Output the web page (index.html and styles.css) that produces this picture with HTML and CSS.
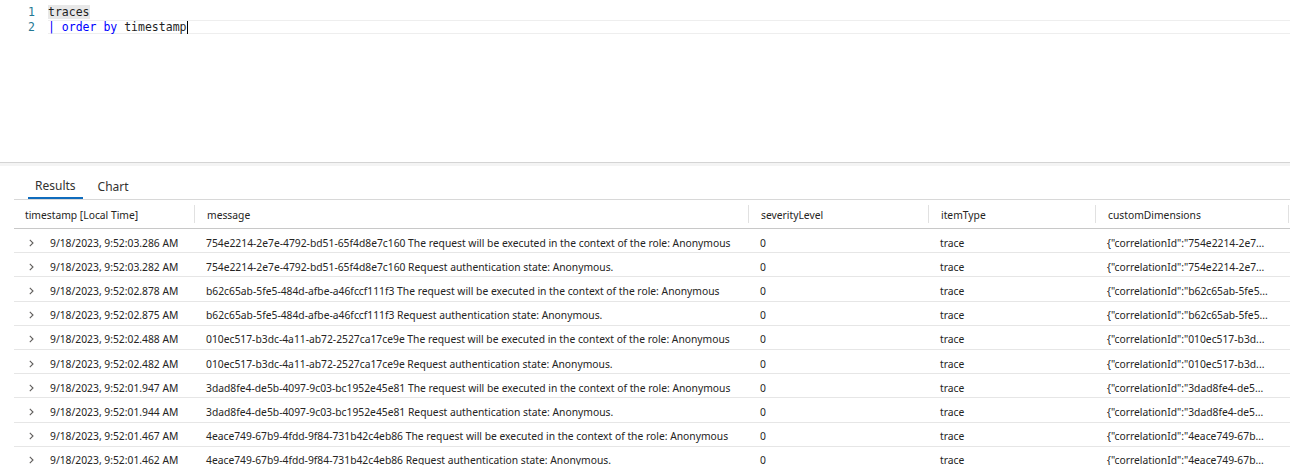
FILE: index.html
```html
<!DOCTYPE html>
<html>
<head>
<meta charset="utf-8">
<link rel="stylesheet" href="styles.css">
</head>
<body>
<div class="editor">
  <div class="line line-1">
    <span class="ln">1</span>
    <span class="code"><span class="word-hl">traces</span></span>
  </div>
  <div class="line line-2">
    <span class="ln">2</span>
    <span class="code current"><span class="kw">| order by</span> timestamp<span class="cursor"></span></span>
  </div>
</div>
<div class="splitter"></div>
<div class="results">
  <div class="tabs">
    <div class="tab active">Results</div>
    <div class="tab">Chart</div>
  </div>
  <div class="grid">
    <div class="row head">
      <div class="cell c1">timestamp [Local Time]</div>
      <div class="cell c2">message</div>
      <div class="cell c3">severityLevel</div>
      <div class="cell c4">itemType</div>
      <div class="cell c5">customDimensions</div>
    </div>
    <div class="row">
      <div class="cell c1"><svg class="chev" width="5" height="8" viewBox="0 0 5 8"><polyline points="0.8,0.8 4,4 0.8,7.2"/></svg>9/18/2023, 9:52:03.286 AM</div>
      <div class="cell c2">754e2214-2e7e-4792-bd51-65f4d8e7c160 The request will be executed in the context of the role: Anonymous</div>
      <div class="cell c3">0</div>
      <div class="cell c4">trace</div>
      <div class="cell c5">{"correlationId":"754e2214-2e7...</div>
    </div>
    <div class="row">
      <div class="cell c1"><svg class="chev" width="5" height="8" viewBox="0 0 5 8"><polyline points="0.8,0.8 4,4 0.8,7.2"/></svg>9/18/2023, 9:52:03.282 AM</div>
      <div class="cell c2">754e2214-2e7e-4792-bd51-65f4d8e7c160 Request authentication state: Anonymous.</div>
      <div class="cell c3">0</div>
      <div class="cell c4">trace</div>
      <div class="cell c5">{"correlationId":"754e2214-2e7...</div>
    </div>
    <div class="row">
      <div class="cell c1"><svg class="chev" width="5" height="8" viewBox="0 0 5 8"><polyline points="0.8,0.8 4,4 0.8,7.2"/></svg>9/18/2023, 9:52:02.878 AM</div>
      <div class="cell c2">b62c65ab-5fe5-484d-afbe-a46fccf111f3 The request will be executed in the context of the role: Anonymous</div>
      <div class="cell c3">0</div>
      <div class="cell c4">trace</div>
      <div class="cell c5">{"correlationId":"b62c65ab-5fe5...</div>
    </div>
    <div class="row">
      <div class="cell c1"><svg class="chev" width="5" height="8" viewBox="0 0 5 8"><polyline points="0.8,0.8 4,4 0.8,7.2"/></svg>9/18/2023, 9:52:02.875 AM</div>
      <div class="cell c2">b62c65ab-5fe5-484d-afbe-a46fccf111f3 Request authentication state: Anonymous.</div>
      <div class="cell c3">0</div>
      <div class="cell c4">trace</div>
      <div class="cell c5">{"correlationId":"b62c65ab-5fe5...</div>
    </div>
    <div class="row">
      <div class="cell c1"><svg class="chev" width="5" height="8" viewBox="0 0 5 8"><polyline points="0.8,0.8 4,4 0.8,7.2"/></svg>9/18/2023, 9:52:02.488 AM</div>
      <div class="cell c2">010ec517-b3dc-4a11-ab72-2527ca17ce9e The request will be executed in the context of the role: Anonymous</div>
      <div class="cell c3">0</div>
      <div class="cell c4">trace</div>
      <div class="cell c5">{"correlationId":"010ec517-b3d...</div>
    </div>
    <div class="row">
      <div class="cell c1"><svg class="chev" width="5" height="8" viewBox="0 0 5 8"><polyline points="0.8,0.8 4,4 0.8,7.2"/></svg>9/18/2023, 9:52:02.482 AM</div>
      <div class="cell c2">010ec517-b3dc-4a11-ab72-2527ca17ce9e Request authentication state: Anonymous.</div>
      <div class="cell c3">0</div>
      <div class="cell c4">trace</div>
      <div class="cell c5">{"correlationId":"010ec517-b3d...</div>
    </div>
    <div class="row">
      <div class="cell c1"><svg class="chev" width="5" height="8" viewBox="0 0 5 8"><polyline points="0.8,0.8 4,4 0.8,7.2"/></svg>9/18/2023, 9:52:01.947 AM</div>
      <div class="cell c2">3dad8fe4-de5b-4097-9c03-bc1952e45e81 The request will be executed in the context of the role: Anonymous</div>
      <div class="cell c3">0</div>
      <div class="cell c4">trace</div>
      <div class="cell c5">{"correlationId":"3dad8fe4-de5...</div>
    </div>
    <div class="row">
      <div class="cell c1"><svg class="chev" width="5" height="8" viewBox="0 0 5 8"><polyline points="0.8,0.8 4,4 0.8,7.2"/></svg>9/18/2023, 9:52:01.944 AM</div>
      <div class="cell c2">3dad8fe4-de5b-4097-9c03-bc1952e45e81 Request authentication state: Anonymous.</div>
      <div class="cell c3">0</div>
      <div class="cell c4">trace</div>
      <div class="cell c5">{"correlationId":"3dad8fe4-de5...</div>
    </div>
    <div class="row">
      <div class="cell c1"><svg class="chev" width="5" height="8" viewBox="0 0 5 8"><polyline points="0.8,0.8 4,4 0.8,7.2"/></svg>9/18/2023, 9:52:01.467 AM</div>
      <div class="cell c2">4eace749-67b9-4fdd-9f84-731b42c4eb86 The request will be executed in the context of the role: Anonymous</div>
      <div class="cell c3">0</div>
      <div class="cell c4">trace</div>
      <div class="cell c5">{"correlationId":"4eace749-67b...</div>
    </div>
    <div class="row">
      <div class="cell c1"><svg class="chev" width="5" height="8" viewBox="0 0 5 8"><polyline points="0.8,0.8 4,4 0.8,7.2"/></svg>9/18/2023, 9:52:01.462 AM</div>
      <div class="cell c2">4eace749-67b9-4fdd-9f84-731b42c4eb86 Request authentication state: Anonymous.</div>
      <div class="cell c3">0</div>
      <div class="cell c4">trace</div>
      <div class="cell c5">{"correlationId":"4eace749-67b...</div>
    </div>
  </div>
</div>
</body>
</html>
```

FILE: styles.css
```css
* { box-sizing: border-box; }
html, body {
  margin: 0;
  padding: 0;
  background: #ffffff;
  overflow: hidden;
}
body {
  width: 1290px;
  height: 465px;
  font-family: "Noto Sans", "Open Sans", sans-serif;
  color: #252423;
}

/* ---------- editor ---------- */
.editor {
  height: 162px;
  padding-top: 5px;
  font-family: "DejaVu Sans Mono", "Liberation Mono", monospace;
  font-size: 11.5px;
}
.line {
  display: flex;
  height: 14px;
  line-height: 14px;
}
.line-2 { margin-top: 1px; }
.ln {
  width: 35px;
  text-align: right;
  color: #237893;
  flex: none;
}
.code {
  margin-left: 13px;
  color: #1f1f1f;
  white-space: pre;
  flex: 1;
  display: flex;
  align-items: center;
}
.word-hl {
  background: #e8e8e8;
}
.current {
  border-top: 1px solid #eeeeee;
  border-bottom: 1px solid #eeeeee;
  line-height: 12px;
}
.kw { color: #0000ff; }
.cursor {
  display: inline-block;
  width: 1px;
  height: 13px;
  background: #000;
}

/* ---------- splitter ---------- */
.splitter {
  height: 4px;
  border-top: 1px solid #d4d4d4;
  background: #f4f4f4;
}

/* ---------- results ---------- */
.results {
  padding-left: 14px;
  padding-top: 4px;
}
.tabs {
  display: flex;
  gap: 8px;
  height: 30px;
  border-bottom: 1px solid #d8d8d8;
  padding-left: 14px;
}
.tab {
  font-size: 12px;
  padding: 2px 7px 0;
  line-height: 29px;
  color: #323130;
}
.tab.active {
  border-bottom: 2px solid #0f6cbd;
  line-height: 27px;
  height: 29px;
}

.row {
  display: grid;
  grid-template-columns: 180px 554px 180px 167px 1fr;
  height: 24.2px;
  align-items: center;
  border-bottom: 1px solid #e6e6e6;
  font-size: 10.3px;
  white-space: nowrap;
}
.row.head {
  height: 29px;
  border-bottom: 1px solid #c8c8c8;
}
.cell {
  padding-left: 12px;
  padding-top: 4px;
  overflow: hidden;
}
.row.head .cell { padding-top: 2px; }
.row .c1 {
  padding-left: 36px;
  display: flex;
  align-items: center;
  position: relative;
}
.row.head .c1 { padding-left: 11px; }
.row.head .cell + .cell {
  border-left: 1px solid #e1e1e1;
  line-height: 16px;
}
.row.head .c5 { border-right: 1px solid #e1e1e1; margin-right: 1px; }
.chev {
  position: absolute;
  left: 15px;
  top: 50%;
  margin-top: -2px;
  fill: none;
  stroke: #605e5c;
  stroke-width: 1.1;
}
```
